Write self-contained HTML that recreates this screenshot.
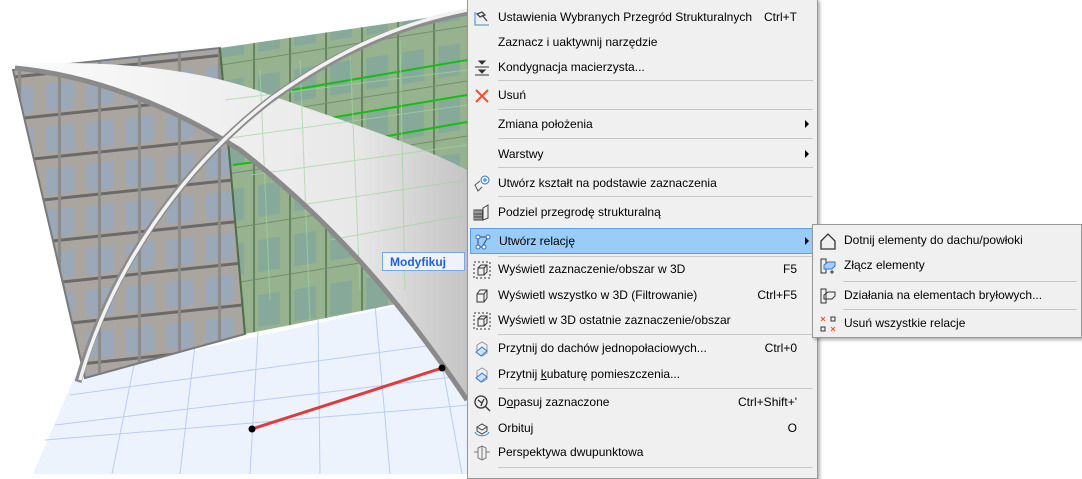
<!DOCTYPE html>
<html><head><meta charset="utf-8"><style>
*{margin:0;padding:0;box-sizing:border-box}
body{width:1082px;height:474px;overflow:hidden;background:#fff;position:relative;font-family:"Liberation Sans",sans-serif;font-size:12px;color:#000}
#menu{position:absolute;left:467px;top:-1px;width:351px;height:480px;background:#f0f0f0;border:1px solid #979797;box-shadow:2px 2px 3px rgba(0,0,0,.3)}
#sub{position:absolute;left:812px;top:224px;width:270px;height:114px;background:#f0f0f0;border:1px solid #979797;box-shadow:2px 2px 3px rgba(0,0,0,.3)}
.it{position:absolute;left:0;right:0;height:25px}
.it .t{position:absolute;left:30px;top:5px;white-space:nowrap}
.it .k{position:absolute;right:20px;top:5px;white-space:nowrap}
.it .a{position:absolute;right:8px;top:8px;width:0;height:0;border-left:4px solid #000;border-top:4px solid transparent;border-bottom:4px solid transparent}
.sep{position:absolute;left:30px;right:4px;height:1px;background:#c8c8c8}
.ic{position:absolute;left:5px;top:4px;width:18px;height:18px}
.hl{background:#99ccf8;border:1px solid #5aa0e6}
</style></head><body>
<svg width="470" height="474" style="position:absolute;left:0;top:0">
<defs>
<linearGradient id="sh" x1="0" y1="0" x2="1" y2="0"><stop offset="0" stop-color="#fbfbfb"/><stop offset=".75" stop-color="#e8e8e8"/><stop offset="1" stop-color="#c4c4c4"/></linearGradient>
<pattern id="win" width="40" height="42" patternUnits="userSpaceOnUse" patternTransform="skewY(-6)"><rect width="40" height="42" fill="#aaa59f"/><rect x="6" y="5" width="28" height="27" fill="#9ba8b7"/><rect x="0" y="35" width="40" height="3" fill="#6a6a6a"/><rect x="18" y="0" width="3" height="42" fill="#8e8a86"/></pattern>
<pattern id="gw" width="36" height="55" patternUnits="userSpaceOnUse" patternTransform="skewY(-9)"><rect width="36" height="55" fill="#97b28f"/><rect x="6" y="6" width="22" height="32" fill="#86a99a"/><line x1="2" y1="0" x2="2" y2="55" stroke="#64845f" stroke-width="2"/><line x1="0" y1="45" x2="36" y2="45" stroke="#6f8f6a" stroke-width="1"/></pattern>
</defs>
<polygon points="75,376 470,290 470,474 33,474" fill="#edf3fd"/>
<g stroke="#b9cdf2" stroke-width="1">
<line x1="70" y1="395" x2="470" y2="340"/><line x1="55" y1="425" x2="470" y2="375"/><line x1="45" y1="440" x2="470" y2="405"/><line x1="135" y1="360" x2="112" y2="474"/><line x1="195" y1="345" x2="180" y2="474"/><line x1="258" y1="332" x2="250" y2="474"/><line x1="318" y1="315" x2="320" y2="474"/><line x1="375" y1="305" x2="390" y2="474"/><line x1="430" y1="298" x2="462" y2="474"/>
</g>
<polygon points="13,70 220,48 245,334 85,378" fill="url(#win)"/>
<polygon points="13,70 220,48 245,334 85,378" fill="none" stroke="#7a7a7a" stroke-width="2"/>
<polygon points="220,48 467,12 467,290 245,334" fill="url(#gw)"/>
<line x1="220" y1="48" x2="245" y2="334" stroke="#4f6f4b" stroke-width="2"/>
<g stroke="#12c012" stroke-width="2"><line x1="292" y1="90" x2="467" y2="60"/><line x1="330" y1="118" x2="467" y2="95"/><line x1="365" y1="140" x2="467" y2="122"/><line x1="233" y1="165" x2="255" y2="162"/></g>
<path d="M15,64 C110,60 200,68 270,95 C340,120 420,145 467,170 L467,400 C400,300 330,220 240,150 C170,105 90,75 15,68 Z" fill="url(#sh)"/>
<g stroke="#9fd69f" stroke-width="1" opacity=".7"><line x1="225" y1="100" x2="467" y2="70"/><line x1="230" y1="138" x2="467" y2="105"/><line x1="250" y1="175" x2="467" y2="145"/><line x1="300" y1="205" x2="467" y2="180"/><line x1="330" y1="240" x2="467" y2="215"/><line x1="260" y1="70" x2="270" y2="300"/><line x1="300" y1="60" x2="310" y2="320"/><line x1="350" y1="50" x2="360" y2="290"/><line x1="400" y1="40" x2="405" y2="290"/></g>
<path d="M15,68 C90,75 170,105 240,150 C330,220 400,300 467,400" fill="none" stroke="#8a8a8a" stroke-width="5"/>
<path d="M78,382 C110,270 180,170 270,100 C340,50 400,25 467,12" fill="none" stroke="#8c8c8c" stroke-width="7"/>
<path d="M80,380 C112,268 182,168 272,98 C342,48 402,23 467,10" fill="none" stroke="#f2f2f2" stroke-width="3.5"/>
<line x1="252" y1="429" x2="442" y2="368" stroke="#e03a3a" stroke-width="3"/>
<circle cx="252" cy="429" r="3.5" fill="#000"/><circle cx="442" cy="368" r="3.5" fill="#000"/>
</svg>
<div style="position:absolute;left:382px;top:252px;width:83px;height:19px;background:#eef3fb;border:1px solid #7aa7e8;color:#2060e0;font-weight:bold;font-size:12px;padding:2px 0 0 7px">Modyfikuj</div>

<div id="menu">
<div class="it" style="top:5px"><svg class="ic" viewBox="0 0 18 18"><path d="M2,3 L2,16 L16,16" fill="none" stroke="#3a8ad8" stroke-width="1"/><path d="M4,5 L9,3 L12,6 L7,8 Z M9,6 L14,12" fill="none" stroke="#444" stroke-width="1.3"/></svg><span class="t">Ustawienia Wybranych Przegród Strukturalnych</span><span class="k">Ctrl+T</span></div>
<div class="it" style="top:30px"><span class="t">Zaznacz i uaktywnij narzędzie</span></div>
<div class="it" style="top:55px"><svg class="ic" viewBox="0 0 18 18"><path d="M6,2 L12,2 L9,5 Z M2,8 L16,8 M6,11 L12,11 L9,14 Z M2,16 L16,16" fill="#333" stroke="#333"/></svg><span class="t">Kondygnacja macierzysta...</span></div>
<div class="sep" style="top:80px"></div>
<div class="it" style="top:83px"><svg class="ic" viewBox="0 0 18 18"><path d="M3,3 L15,15 M15,3 L3,15" stroke="#f0502a" stroke-width="2"/></svg><span class="t">Usuń</span></div>
<div class="sep" style="top:109px"></div>
<div class="it" style="top:112px"><span class="t">Zmiana położenia</span><span class="a"></span></div>
<div class="sep" style="top:138px"></div>
<div class="it" style="top:142px"><span class="t">Warstwy</span><span class="a"></span></div>
<div class="sep" style="top:167px"></div>
<div class="it" style="top:171px"><svg class="ic" viewBox="0 0 18 18"><circle cx="12" cy="5" r="4" fill="none" stroke="#2a7ad8"/><path d="M12,3 V7 M10,5 H14" stroke="#2a7ad8"/><path d="M7,6 L2,10 L5,16 L9,12" fill="none" stroke="#555"/></svg><span class="t">Utwórz kształt na podstawie zaznaczenia</span></div>
<div class="sep" style="top:196px"></div>
<div class="it" style="top:200px"><svg class="ic" viewBox="0 0 18 18"><path d="M1,6 H9 V16 H1 Z M3,6 V16 M5,6 V16 M7,6 V16 M1,10 H9 M1,13 H9 M10,4 L15,1 V14 L10,16 Z" fill="none" stroke="#444"/></svg><span class="t">Podziel przegrodę strukturalną</span></div>
<div class="it hl" style="top:228px;left:2px;right:4px;height:26px"><svg class="ic" viewBox="0 0 18 18" style="left:3px"><path d="M4,4 H14 M4,4 V14 M14,4 L8,14 M4,14 H8" fill="none" stroke="#444"/><circle cx="4" cy="4" r="2" fill="#fff" stroke="#2a6ad0"/><circle cx="14" cy="4" r="2" fill="#fff" stroke="#2a6ad0"/><circle cx="4" cy="14" r="2" fill="#fff" stroke="#2a6ad0"/><circle cx="10" cy="14" r="2" fill="#fff" stroke="#2a6ad0"/></svg><span class="t" style="left:28px">Utwórz relację</span><span class="a" style="right:3px"></span></div>
<div class="sep" style="top:256px"></div>
<div class="it" style="top:257px"><svg class="ic" viewBox="0 0 18 18"><rect x="1" y="1" width="16" height="16" fill="none" stroke="#333" stroke-dasharray="2,2"/><path d="M5,7 H11 V14 H5 Z M5,7 L8,4 H14 V11 L11,14 M11,7 L14,4" fill="none" stroke="#333"/></svg><span class="t">Wyświetl zaznaczenie/obszar w 3D</span><span class="k">F5</span></div>
<div class="it" style="top:283px"><svg class="ic" viewBox="0 0 18 18"><path d="M4,7 H11 V15 H4 Z M4,7 L7,3 H14 V11 L11,15 M11,7 L14,3" fill="none" stroke="#333"/></svg><span class="t">Wyświetl wszystko w 3D (Filtrowanie)</span><span class="k">Ctrl+F5</span></div>
<div class="it" style="top:308px"><svg class="ic" viewBox="0 0 18 18"><rect x="1" y="1" width="16" height="16" fill="none" stroke="#333" stroke-dasharray="2,2"/><path d="M5,7 H11 V14 H5 Z M5,7 L8,4 H14 V11 L11,14 M11,7 L14,4" fill="none" stroke="#333"/></svg><span class="t">Wyświetl w 3D ostatnie zaznaczenie/obszar</span></div>
<div class="sep" style="top:334px"></div>
<div class="it" style="top:336px"><svg class="ic" viewBox="0 0 18 18"><path d="M4,5 L9,2 L14,5 V13 L9,16 L4,13 Z" fill="none" stroke="#999"/><path d="M3,12 L9,7 L14,11 L8,16 Z" fill="#cfe3fb" stroke="#2a7ad8"/></svg><span class="t">Przytnij do dachów jednopołaciowych...</span><span class="k">Ctrl+0</span></div>
<div class="it" style="top:362px"><svg class="ic" viewBox="0 0 18 18"><path d="M4,5 L9,2 L14,5 V13 L9,16 L4,13 Z" fill="none" stroke="#999"/><path d="M3,12 L9,7 L14,11 L8,16 Z" fill="#cfe3fb" stroke="#2a7ad8"/></svg><span class="t">Przytnij <u>k</u>ubaturę pomieszczenia...</span></div>
<div class="sep" style="top:388px"></div>
<div class="it" style="top:390px"><svg class="ic" viewBox="0 0 18 18"><circle cx="8" cy="8" r="6" fill="none" stroke="#333" stroke-width="1.3"/><path d="M12,12 L17,17 M5,6 L9,9 L11,5 M9,9 L8,12" stroke="#333" stroke-width="1.3" fill="none"/></svg><span class="t">D<u>o</u>pasuj zaznaczone</span><span class="k">Ctrl+Shift+'</span></div>
<div class="it" style="top:416px"><svg class="ic" viewBox="0 0 18 18"><path d="M4,7 L9,4 L14,7 L9,10 Z M4,7 V11 L9,14 L14,11 V7" fill="none" stroke="#444"/><path d="M2,12 C4,17 14,17 16,12" fill="none" stroke="#2a7ad8"/></svg><span class="t">Orbituj</span><span class="k">O</span></div>
<div class="it" style="top:440px"><svg class="ic" viewBox="0 0 18 18"><path d="M5,4 L9,2 L13,4 V14 L9,16 L5,14 Z M9,2 V16 M1,8 H5 M13,8 H17" fill="none" stroke="#777"/></svg><span class="t">Perspektywa dwupunktowa</span></div>
<div class="sep" style="top:467px"></div>
</div>

<div id="sub">
<div class="it" style="top:3px"><svg class="ic" viewBox="0 0 18 18" style="left:6px"><path d="M2,9 L9,2 L16,9 V17 H2 Z" fill="none" stroke="#333" stroke-width="1.3"/></svg><span class="t" style="left:31px">Dotnij elementy do dachu/powłoki</span></div>
<div class="it" style="top:28px"><svg class="ic" viewBox="0 0 18 18" style="left:6px"><path d="M2,2 H7 V16 H2 Z" fill="none" stroke="#333"/><path d="M5,8 L9,5 H16 V9 L13,12 H5 Z" fill="#a9cdf5" stroke="#2a7ad8"/><path d="M11,15 H15 M13,13 V17" stroke="#333"/></svg><span class="t" style="left:31px">Złącz elementy</span></div>
<div class="sep" style="top:56px;left:30px"></div>
<div class="it" style="top:58px"><svg class="ic" viewBox="0 0 18 18" style="left:6px"><path d="M2,2 H7 V16 H2 Z M5,8 L9,5 H16 V9 L13,12 H5 Z" fill="none" stroke="#333"/></svg><span class="t" style="left:31px">Działania na elementach bryłowych...</span></div>
<div class="sep" style="top:84px;left:30px"></div>
<div class="it" style="top:86px"><svg class="ic" viewBox="0 0 18 18" style="left:6px"><path d="M2,2 L6,6 M6,2 L2,6 M12,12 L16,16 M16,12 L12,16" stroke="#f0502a"/><rect x="12" y="2" width="4" height="4" fill="none" stroke="#333"/><rect x="2" y="12" width="4" height="4" fill="none" stroke="#333"/></svg><span class="t" style="left:31px">Usuń wszystkie relacje</span></div>
</div>
</body></html>
